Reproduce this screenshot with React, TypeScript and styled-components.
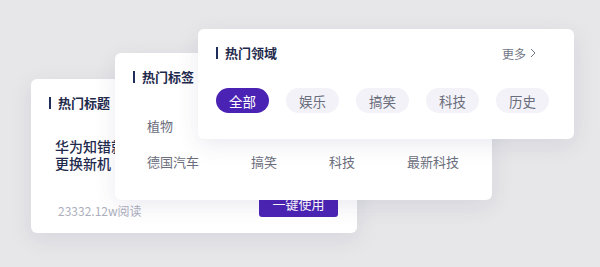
import styled, { createGlobalStyle } from 'styled-components';

const GlobalStyle = createGlobalStyle`
  html, body {
    margin: 0;
    padding: 0;
    background: #e7e7e9;
  }
  body {
    font-family: 'Noto Sans CJK SC', 'Noto Sans', sans-serif;
  }
`;

const Stage = styled.div`
  position: relative;
  width: 600px;
  height: 267px;
  overflow: hidden;
  background: #e7e7e9;
`;

const Card = styled.div<{ $x: number; $y: number; $w: number; $h: number; $z: number }>`
  position: absolute;
  left: ${(p) => p.$x}px;
  top: ${(p) => p.$y}px;
  width: ${(p) => p.$w}px;
  height: ${(p) => p.$h}px;
  z-index: ${(p) => p.$z};
  box-sizing: border-box;
  display: flex;
  flex-direction: column;
  background: #ffffff;
  border-radius: 6px;
  box-shadow: 0 6px 22px rgba(60, 60, 120, 0.1);
  padding: 16px 19px 16px 18px;
`;

const TitleRow = styled.div`
  display: flex;
  align-items: center;
  justify-content: space-between;
  height: 16px;
`;

const Title = styled.div`
  display: flex;
  align-items: center;
  gap: 7px;
  font-size: 13px;
  font-weight: 700;
  line-height: 16px;
  color: #1f2a4d;

  &::before {
    content: '';
    display: block;
    width: 2px;
    height: 12px;
    background: #1f2d5a;
  }
`;

const More = styled.div`
  display: flex;
  align-items: center;
  gap: 3px;
  margin-right: 18px;
  font-size: 12px;
  color: #737787;

  svg {
    width: 8px;
    height: 10px;
  }
`;

const ChipRow = styled.div`
  display: flex;
  gap: 17px;
  margin-top: 27px;
`;

const Chip = styled.div<{ $active?: boolean }>`
  height: 25px;
  width: 53px;
  border-radius: 13px;
  display: flex;
  align-items: center;
  justify-content: center;
  font-size: 13.5px;
  background: ${(p) => (p.$active ? '#4b23b4' : '#f2f2f8')};
  color: ${(p) => (p.$active ? '#ffffff' : '#6a6d7c')};
`;

const TagList = styled.div`
  display: flex;
  flex-direction: column;
  gap: 18px;
  margin-top: 32px;
  padding-left: 14px;
`;

const TagRow = styled.div`
  display: flex;
  gap: 52px;
`;

const Tag = styled.span`
  font-size: 13px;
  line-height: 18px;
  color: #6b6e7c;
  white-space: nowrap;
`;

const Headline = styled.div`
  margin-top: 27px;
  padding-left: 6px;
  font-size: 14px;
  font-weight: 500;
  line-height: 17px;
  color: #1f2a4d;
  white-space: nowrap;
`;

const Footer = styled.div`
  margin-top: auto;
  display: flex;
  align-items: flex-end;
  justify-content: space-between;
  padding-left: 9px;
`;

const Reads = styled.span`
  font-size: 12px;
  line-height: 14px;
  color: #adafbd;
  margin-bottom: -1px;
`;

const UseButton = styled.button`
  height: 28px;
  width: 79px;
  border: none;
  border-radius: 3px;
  background: #4b23b4;
  color: #ffffff;
  font-family: inherit;
  font-size: 13px;
  padding: 0;
`;

const Chevron = () => (
  <svg viewBox="0 0 8 10" fill="none" stroke="#737787" strokeWidth="1">
    <path d="M2 1l4 4-4 4" />
  </svg>
);

const App = () => {
  return (
    <Stage>
      <GlobalStyle />
      <Card $x={31} $y={79} $w={326} $h={154} $z={1}>
        <TitleRow>
          <Title>热门标题</Title>
        </TitleRow>
        <Headline>
          华为知错就改
          <br />
          更换新机
        </Headline>
        <Footer>
          <Reads>23332.12w阅读</Reads>
          <UseButton>一键使用</UseButton>
        </Footer>
      </Card>

      <Card $x={115} $y={53} $w={377} $h={147} $z={2}>
        <TitleRow>
          <Title>热门标签</Title>
        </TitleRow>
        <TagList>
          <TagRow>
            <Tag>植物</Tag>
          </TagRow>
          <TagRow>
            <Tag>德国汽车</Tag>
            <Tag>搞笑</Tag>
            <Tag>科技</Tag>
            <Tag>最新科技</Tag>
          </TagRow>
        </TagList>
      </Card>

      <Card $x={198} $y={29} $w={376} $h={110} $z={3}>
        <TitleRow>
          <Title>热门领域</Title>
          <More>
            更多
            <Chevron />
          </More>
        </TitleRow>
        <ChipRow>
          <Chip $active>全部</Chip>
          <Chip>娱乐</Chip>
          <Chip>搞笑</Chip>
          <Chip>科技</Chip>
          <Chip>历史</Chip>
        </ChipRow>
      </Card>
    </Stage>
  );
};

export default App;
